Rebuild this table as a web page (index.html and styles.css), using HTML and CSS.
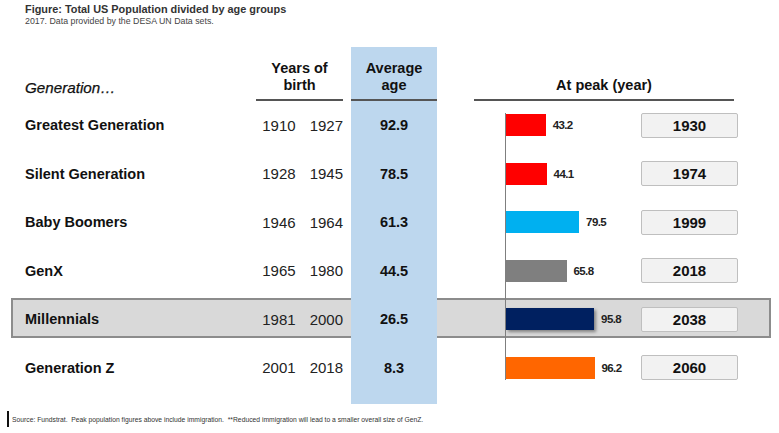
FILE: index.html
```html
<!DOCTYPE html>
<html lang="en">
<head>
<meta charset="utf-8">
<title>Total US Population divided by age groups</title>
<link rel="stylesheet" href="styles.css">
</head>
<body>
<header class="fig">
  <h1 class="title">Figure: Total US Population divided by age groups</h1>
  <p class="sub">2017. Data provided by the DESA UN Data sets.</p>
</header>

<section class="tbl">
  <div class="band"></div>
  <div class="stripe"></div>
  <div class="axis"></div>

  <div class="h h-gen">Generation…</div>
  <div class="h h-years">Years of<br>birth</div>
  <div class="h h-avg">Average<br>age</div>
  <div class="h h-peak">At peak (year)</div>

  <div class="row g1">
    <div class="name">Greatest Generation</div>
    <div class="years"><span>1910</span><span>1927</span></div>
    <div class="avg">92.9</div>
    <div class="chart"><div class="barwrap"><div class="bar red" style="width:39.7px"></div><span class="val">43.2</span></div><div class="yr">1930</div></div>
  </div>
  <div class="row g2">
    <div class="name">Silent Generation</div>
    <div class="years"><span>1928</span><span>1945</span></div>
    <div class="avg">78.5</div>
    <div class="chart"><div class="barwrap"><div class="bar red" style="width:40.6px"></div><span class="val">44.1</span></div><div class="yr">1974</div></div>
  </div>
  <div class="row g3">
    <div class="name">Baby Boomers</div>
    <div class="years"><span>1946</span><span>1964</span></div>
    <div class="avg">61.3</div>
    <div class="chart"><div class="barwrap"><div class="bar sky" style="width:73.1px"></div><span class="val">79.5</span></div><div class="yr">1999</div></div>
  </div>
  <div class="row g4">
    <div class="name">GenX</div>
    <div class="years"><span>1965</span><span>1980</span></div>
    <div class="avg">44.5</div>
    <div class="chart"><div class="barwrap"><div class="bar grey" style="width:60.5px"></div><span class="val">65.8</span></div><div class="yr">2018</div></div>
  </div>
  <div class="row g5">
    <div class="name">Millennials</div>
    <div class="years"><span>1981</span><span>2000</span></div>
    <div class="avg">26.5</div>
    <div class="chart"><div class="barwrap"><div class="bar navy" style="width:88.1px"></div><span class="val">95.8</span></div><div class="yr">2038</div></div>
  </div>
  <div class="row g6">
    <div class="name">Generation Z</div>
    <div class="years"><span>2001</span><span>2018</span></div>
    <div class="avg">8.3</div>
    <div class="chart"><div class="barwrap"><div class="bar orange" style="width:88.5px"></div><span class="val">96.2</span></div><div class="yr">2060</div></div>
  </div>
</section>

<footer class="foot">
  <p class="src">Source: Fundstrat.  Peak population figures above include immigration.  **Reduced immigration will lead to a smaller overall size of GenZ.</p>
</footer>
</body>
</html>
```

FILE: styles.css
```css
* { box-sizing: border-box; }

html, body {
  margin: 0;
  padding: 0;
  background: #ffffff;
}

body {
  width: 779px;
  height: 433px;
  overflow: hidden;
  font-family: "Liberation Sans", Arial, sans-serif;
  color: #111;
}

/* ---------- figure caption ---------- */
.fig {
  padding: 3px 0 0 25px;
}

.title {
  margin: 0;
  font-size: 10.9px;
  line-height: 13px;
  font-weight: 700;
  color: #333;
}

.sub {
  margin: 0;
  font-size: 8.8px;
  line-height: 10px;
  color: #444;
}

/* ---------- table grid ---------- */
.tbl {
  display: grid;
  margin: 21px 0 0 11px;
  width: 760px;
  grid-template-columns: 245px 87px 8px 86px 37px 264px 33px;
  grid-template-rows: 54px repeat(6, 48.5px) 12px;
}

.row { display: contents; }
.g1 > * { grid-row: 2; }
.g2 > * { grid-row: 3; }
.g3 > * { grid-row: 4; }
.g4 > * { grid-row: 5; }
.g5 > * { grid-row: 6; }
.g6 > * { grid-row: 7; }

.band {
  grid-row: 6;
  grid-column: 1 / -1;
  margin: 3px 0 5.5px;
  background: #d9d9d9;
  border: 2px solid #8c8c8c;
}

.stripe {
  grid-row: 1 / -1;
  grid-column: 4;
  background: #bdd7ee;
}

.axis {
  grid-row: 2 / 8;
  grid-column: 6;
  margin: 12px 0 12px 31px;
  width: 0;
  border-left: 1.5px solid #7f7f7f;
}

/* ---------- headers ---------- */
.h {
  grid-row: 1;
  align-self: end;
  font-size: 14.5px;
  line-height: 17px;
  font-weight: 700;
  text-align: center;
}

.h-gen {
  grid-column: 1;
  text-align: left;
  padding: 0 0 5px 14px;
  font-size: 15.2px;
  font-weight: 400;
  font-style: italic;
  -webkit-text-stroke: 0.25px #111;
}

.h-years {
  grid-column: 2;
  padding-bottom: 5px;
  border-bottom: 2px solid #555;
}

.h-avg {
  grid-column: 4;
  padding-bottom: 5px;
  border-bottom: 2px solid #555;
}

.h-peak {
  grid-column: 6;
  margin-right: 4px;
  padding-bottom: 5px;
  border-bottom: 2px solid #555;
}

/* ---------- cells ---------- */
.name, .years, .avg, .chart {
  display: flex;
  align-items: center;
}

.name {
  grid-column: 1;
  padding-left: 14px;
  font-size: 14.5px;
  font-weight: 700;
}

.years {
  grid-column: 2;
  justify-content: flex-end;
  gap: 14px;
  font-size: 15px;
  color: #222;
}

.avg {
  grid-column: 4;
  justify-content: center;
  font-size: 14.5px;
  font-weight: 700;
}

.chart {
  grid-column: 6;
  padding-left: 32px;
  justify-content: space-between;
}

.barwrap {
  display: flex;
  align-items: center;
  gap: 7px;
}

.bar {
  height: 22px;
}
.red { background: #ff0000; }
.sky { background: #00b0f0; }
.grey { background: #7f7f7f; }
.navy { background: #002060; box-shadow: 2px 2px 3px rgba(0,0,0,0.4); }
.orange { background: #ff6600; }

.val {
  font-size: 11.5px;
  font-weight: 700;
  letter-spacing: -0.6px;
  color: #222;
}

.yr {
  width: 97px;
  height: 25px;
  display: flex;
  align-items: center;
  justify-content: center;
  background: #f2f2f2;
  border: 1.5px solid #bfbfbf;
  border-radius: 2px;
  font-size: 15px;
  font-weight: 700;
  color: #111;
}

/* ---------- footer ---------- */
.foot {
  margin: 7px 0 0 7px;
  height: 16px;
  border-left: 2px solid #111;
  padding-left: 3px;
  display: flex;
  align-items: center;
}

.src {
  margin: 0;
  font-size: 6.75px;
  white-space: pre;
  color: #333;
}
```
